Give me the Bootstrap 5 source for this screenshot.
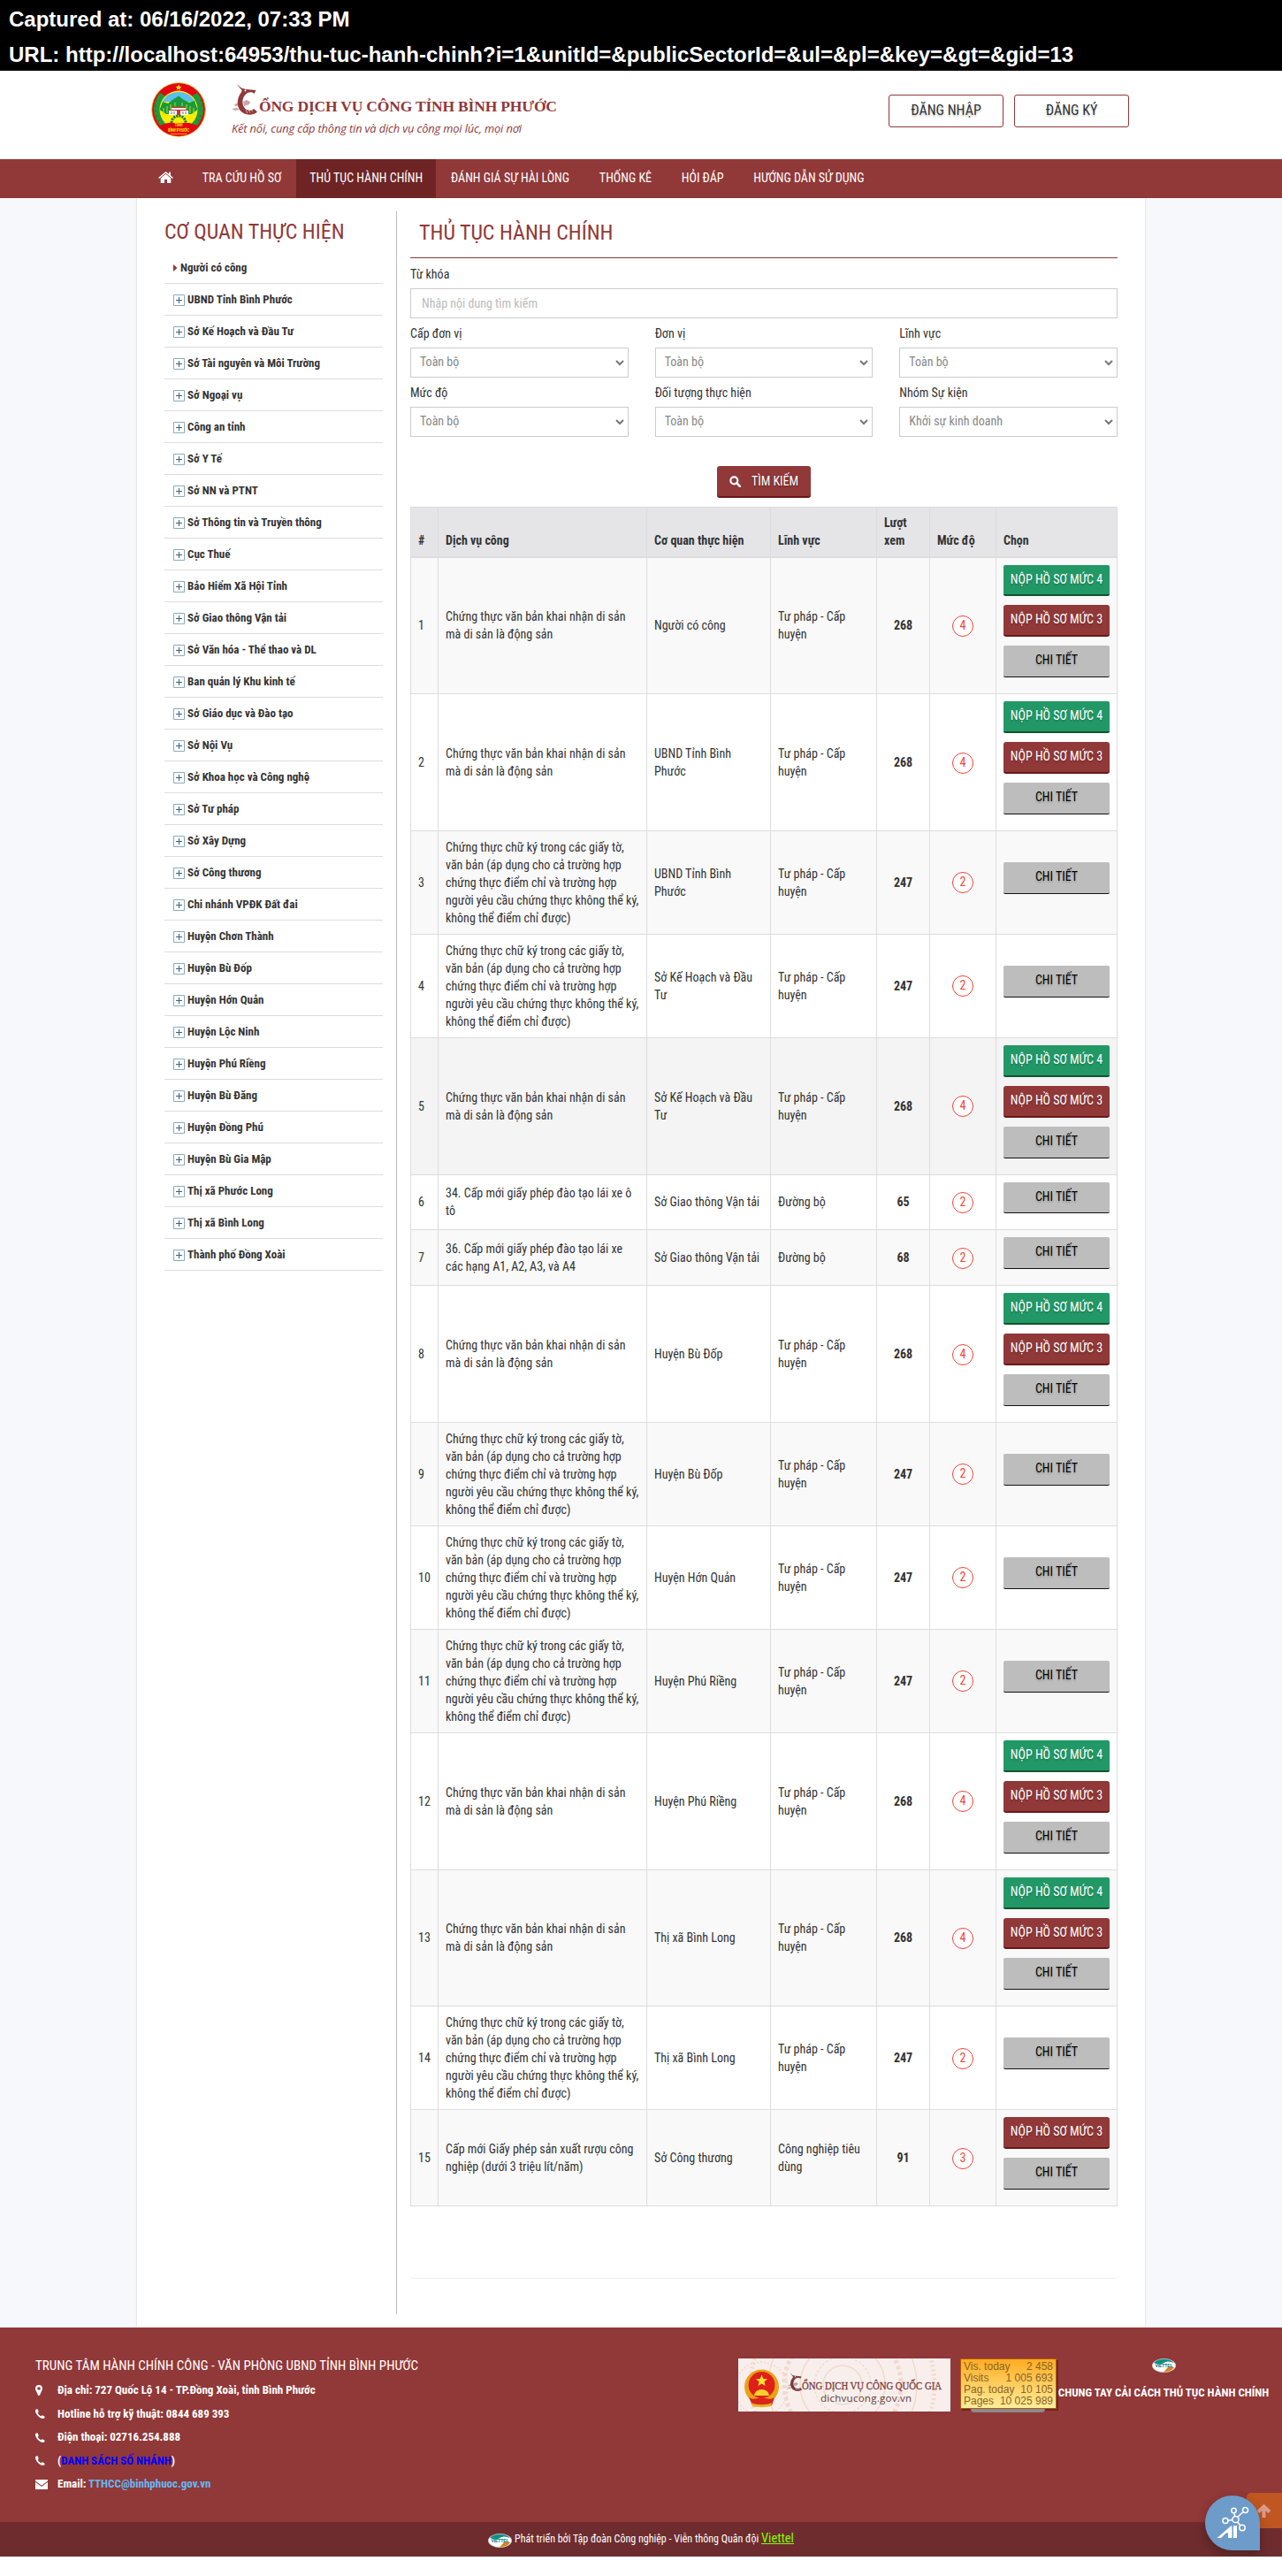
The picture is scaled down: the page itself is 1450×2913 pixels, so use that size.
<!DOCTYPE html>
<html lang="vi">
<head>
<meta charset="utf-8">
<title>Thủ tục hành chính</title>
<meta name="viewport" content="width=device-width, initial-scale=1">
<link href="https://cdn.jsdelivr.net/npm/bootstrap@5.3.0/dist/css/bootstrap.min.css" rel="stylesheet">
<script src="https://cdn.jsdelivr.net/npm/bootstrap@5.3.0/dist/js/bootstrap.bundle.min.js"></script>
<style>
:root{--brand:#913838;--brand-dark:#6e2424}
body{font-family:"Roboto Condensed",Roboto,"Liberation Sans",sans-serif;font-size:14px;line-height:20px;color:#333;background:#fff}
svg{display:block;flex:none}
.capture-bar{height:80px;background:#000;color:#fff;font:bold 24px/40px "Liberation Sans",Arial,sans-serif;padding:2px 0 0 10px}
.page-wrap{width:1140px;margin:0 auto}
.site-head{height:100px;padding:13px 18px 0 16px}
.wordmark{margin-left:29px}
.btn-auth{width:130px;height:37px;border:1px solid var(--brand);border-radius:3px;color:#333;font-size:16px;line-height:20px;padding-top:7px;text-align:center;text-shadow:0 2px 2px rgba(0,0,0,.2);text-decoration:none;margin-top:14px}
.main-nav{background:var(--brand);height:44px}
.main-nav a{color:#fff;line-height:43px;height:44px;text-decoration:none;padding:0 17px 0 16.8px;display:block;white-space:nowrap}
.main-nav a.on{background:var(--brand-dark);padding:0 15px}
.main-nav a.home-link{padding:14px 16px 0 24px}
.page-bg{background:#f7f8fb}
.sheet{background:#fff;height:2408px;box-shadow:0 0 2px rgba(0,0,0,.2);padding:15px 31px 15px 31px}
.side-col{width:263px;border-right:1px solid #bbb;height:2378px;padding-right:15px;flex:none}
.main-col{width:800px;flex:none;margin-left:15px}
.sec-title{font-size:24px;line-height:30px;color:var(--brand);font-weight:400;margin:0}
.side-col .sec-title{padding:8px 0 8px}
.main-col .sec-title{padding:9px 0 13px 10px;border-bottom:1px solid var(--brand);height:53px}
.unit-item{height:36px;border-bottom:1px solid #ddd;font-weight:700;font-size:13px;padding:0 0 0 10px}
.unit-item svg{margin:2px 3px 0 0}
.fld{height:20px;margin:0 0 6px;display:block}
.main-col .form-control,.main-col .form-select{height:34px;border:1px solid #ccc;border-radius:0;font-size:14px;line-height:20px;padding:5px 12px;color:#888;background-color:#fff}
.main-col .form-control::placeholder{color:#bbb;opacity:1}
.main-col .form-select{padding:4px 10px 6px;background-image:url("data:image/svg+xml,%3Csvg xmlns='http://www.w3.org/2000/svg' viewBox='0 0 10 7'%3E%3Cpath d='M1 1l4 4 4-4' fill='none' stroke='%23777' stroke-width='2'/%3E%3C/svg%3E");background-size:10px 7px;background-position:right 4px center}
.btn-find{width:106px;height:36px;background:var(--brand);border:0;border-bottom:2px solid #6b1717;border-radius:3px;color:#fff;font-size:14px;text-shadow:0 1px 2px rgba(0,0,0,.4);padding:0}
.svc{table-layout:fixed;width:800px;margin:0;border-collapse:collapse;color:#333}
.svc th,.svc td{border:1px solid #ddd;padding:8px;vertical-align:middle}
.svc th{background:#e5e5e8;vertical-align:bottom;border-bottom-width:2px;padding:7px 8px 7.500px}
.svc tr.odd td{background:#f9f9f9}
.svc tr.hov td{background:#f4f4f4}
.lvl{display:block;width:24px;height:24px;border:1px solid #f44336;border-radius:50%;color:#f44336;line-height:21px;background:#fff;text-align:center;margin:1px auto 0}
.act{display:block;width:120px;height:35.9px;border-radius:2px;margin-bottom:10px;text-align:center;line-height:33px;text-decoration:none;text-shadow:0 2px 2px rgba(0,0,0,.2)}
.act-4{background:#229866;border-bottom:2px solid #14532f;color:#fff}
.act-3{background:var(--brand);border-bottom:2px solid #6b1717;color:#fff;border-radius:3px}
.act-d{background:#bcbdbc;border-bottom:1px solid #111;color:#000}
.table-box{height:2004px;border-bottom:1px solid #eee;border-radius:4px}
.foot{background:var(--brand);height:220px;color:#fff;padding:33px 15px 0 40px}
.foot-head{font-size:15px;line-height:20px;margin-bottom:5px}
.foot-line{font-size:13px;font-weight:700;height:26.5px;line-height:26px}
.foot-line .ico{width:25px;flex:none}
.foot-line a{text-decoration:none}
.counter{width:109px;height:57px;margin-left:11px;border:1px solid #e08a00;outline:1px solid #b35a10;outline-offset:-1px;background:linear-gradient(#ffab22,#ffee9c);font:12px/13px "Liberation Sans",Arial,sans-serif;color:#8a6420;padding:2px 3px;box-shadow:2px 2px 0 rgba(60,20,20,.45);white-space:nowrap}
.counter-foot{width:84px;height:4px;background:#8b8b8b;margin:0 0 0 23px;border-radius:0 0 4px 4px}
.slogan-foot{font-weight:700;font-size:13px;line-height:20px;margin-top:13px}
.foot-end{background:#6e2c2e;height:39px;color:#fff;font-size:12px;padding-bottom:1px}
.foot-end a{color:#7fff00;font-size:14.5px;text-decoration:underline}
.to-top{position:absolute;left:1410px;top:2819px;width:40px;height:40px;background:#c05621;border-radius:5px 0 0 5px}
.ai-bot{position:absolute;left:1363px;top:2822px;width:62px;height:62px;background:#6d9bca;border-radius:50% 50% 0 50%;box-shadow:0 5px 12px rgba(0,0,0,.25)}
</style>
</head>
<body class="position-relative">
<svg width="0" height="0" class="position-absolute">
  <defs>
    <symbol id="viettel" viewBox="0 0 27 16">
      <ellipse cx="13.5" cy="8" rx="13.3" ry="7.8" fill="#fff"/>
      <path d="M2 5C5 1 9 .5 14 .5s9 2 10.500 4.500c-4-2-8-2-11 0s-8 1.500-11.500 0z" fill="#0f8f83"/>
      <path d="M12.500 15.500c5 .3 10-1.500 12.500-5.500-3.500-1.500-7-.5-8.500 1.500s-2.500 3-4 4z" fill="#d9801f"/>
      <ellipse cx="13.5" cy="8" rx="13" ry="7.500" fill="none" stroke="#bfc9c7" stroke-width=".6"/>
      <text x="13.500" y="9.800" font-size="5" font-weight="700" font-family="Liberation Sans" text-anchor="middle" textLength="20" fill="#0a6f68">VIETTEL</text>
    </symbol>
    <symbol id="phone" viewBox="0 0 11 11"><path d="M0 1.200C1 .2 2.200-.2 2.600.6L3.700 3c.2.6-.9 1-1 1.500.3 1.200 2.200 3.300 3.500 3.700.6 0 1.100-1.100 1.800-.9l2.500 1.500c.5.400-.3 1.700-1 2C5.500 12-.8 5.500 0 1.200z" fill="#fff"/></symbol>
    <symbol id="dragonC" viewBox="0 0 30 36">
      <path d="M5.500 0L11 4.500 16 6l6.500.5 5 .5-2 4-2-1.500c-3-.5-5.500.3-7.500 2-4.500 4-5 12.500-.5 16.500 2 1.700 4.500 2 7.500 1.500L25 28l4 3.500c-4 3.500-10 4-14.500 2C5.500 30 5 18 9.500 11.500 10.500 9.600 12 8 11.500 7z" fill="currentColor"/>
      <path d="M0 28l6-1 3 2-5 1zM3 23l5-2 2 3-6 1zM13 20l4-2 4 2-1 3-6 2z" fill="currentColor" opacity=".45"/>
      <path d="M16 29l2 4M19 29l2 3.500M22 28.500l2 3" stroke="#fff" stroke-width=".6"/>
      <circle cx="15.500" cy="7.500" r="1" fill="#fff"/>
    </symbol>
  </defs>
</svg>

<div class="capture-bar"><div>Captured at: 06/16/2022, 07:33 PM</div><div>URL: http://localhost:64953/thu-tuc-hanh-chinh?i=1&amp;unitId=&amp;publicSectorId=&amp;ul=&amp;pl=&amp;key=&amp;gt=&amp;gid=13</div></div>

<header class="page-wrap site-head d-flex align-items-start">
  <svg width="62" height="62" viewBox="0 0 62 62">
    <circle cx="31" cy="31" r="30.300" fill="#e30613" stroke="#e8c21a" stroke-width=".8"/>
    <path d="M10 12A28 28 0 0 0 12 51l8-8V18zM52 12a28 28 0 0 1-2 39l-8-8V18z" fill="#1d9a3c"/>
    <circle cx="31" cy="31" r="21.500" fill="#ffed00"/>
    <path d="M12.500 22a21 21 0 0 1 37 0z" fill="#5bc0f0"/>
    <path d="M9.500 31L13 22l6 2 5-4 7-4.500 6 4.500 6 3 6-2 3.500 10-7 5H17z" fill="#189a3a"/>
    <path d="M18 27v8M22 25v6M40 25v6M44 27v8M14 29v8M48 29v8M27 23v4M35 23v4" stroke="#b7d93a" stroke-width="1"/>
    <path d="M23 29h16v2H23zM20 32h22v5H20z" fill="#fff"/><path d="M20 31.500h22M23 28.500h16" stroke="#d22" stroke-width="1"/>
    <path d="M23 33v3M26 33v3M36 33v3M39 33v3" stroke="#678" stroke-width="1"/><path d="M29 32h4v5h-4z" fill="#c33"/>
    <path d="M23 46a8 8 0 0 1 16 0" fill="none" stroke="#147a35" stroke-width="3" stroke-dasharray="2.200 1"/>
    <path d="M8 50c3-2 7-3 11-4h24c4 1 8 2 11 4a30 30 0 0 1-46 0z" fill="#e30613"/>
    <path d="M31 2.500l1 2.300 2.400.1-1.900 1.500.7 2.400-2.200-1.400-2.200 1.400.7-2.400-1.900-1.500 2.400-.1z" fill="#ffed00"/>
    <g stroke="#e30613" stroke-width="1.300" fill="none" stroke-dasharray="1 5"><path d="M6 20a28 28 0 0 0 5 27M56 20a28 28 0 0 1-5 27"/></g>
    <text x="31" y="50" font-size="4.500" font-weight="700" fill="#ffd900" text-anchor="middle">TỈNH</text>
    <text x="31" y="56" font-size="5" font-weight="700" fill="#ffd900" text-anchor="middle" textLength="24">BÌNH PHƯỚC</text>
    <path d="M22 58.500h18" stroke="#ffd900" stroke-width=".7"/>
  </svg>
  <svg class="wordmark" width="370" height="66" viewBox="0 0 370 66" style="color:#913838">
    <use href="#dragonC" x="0" y="2" width="30" height="36"/>
    <text x="31" y="32.500" font-family="Liberation Serif" font-weight="700" font-size="17.500" textLength="337" fill="#913838">ỔNG DỊCH VỤ CÔNG TỈNH BÌNH PHƯỚC</text>
    <text x="0" y="57" font-family="Open Sans" font-style="italic" font-size="12.800" textLength="328" fill="#913838">Kết nối, cung cấp thông tin và dịch vụ công mọi lúc, mọi nơi</text>
  </svg>
  <div class="d-flex ms-auto" style="gap:12px">
    <a class="btn-auth" href="#">ĐĂNG NHẬP</a><a class="btn-auth" href="#">ĐĂNG KÝ</a>
  </div>
</header>

<nav class="main-nav"><div class="page-wrap d-flex">
  <a href="#" class="home-link"><svg width="17" height="13" viewBox="0 0 17 13" fill="#fff"><path d="M8.500 0L0 7l.9 1 7.600-6.300L16.100 8l.9-1-3-2.500V.8h-2v2z"/><path d="M8.500 2.800L2.700 7.500V13h4.300V9h3v4h4.300V7.500z"/></svg></a>
  <a href="#">TRA CỨU HỒ SƠ</a><a href="#" class="on">THỦ TỤC HÀNH CHÍNH</a><a href="#">ĐÁNH GIÁ SỰ HÀI LÒNG</a><a href="#">THỐNG KÊ</a><a href="#">HỎI ĐÁP</a><a href="#">HƯỚNG DẪN SỬ DỤNG</a>
</div></nav>

<main class="page-bg"><div class="page-wrap sheet d-flex">
  <aside class="side-col">
    <h2 class="sec-title">CƠ QUAN THỰC HIỆN</h2>
    <div id="units"></div>
  </aside>
  <section class="main-col">
    <h2 class="sec-title">THỦ TỤC HÀNH CHÍNH</h2>
    <div style="padding-top:8px"><label class="fld">Từ khóa</label><input class="form-control" placeholder="Nhập nội dung tìm kiếm"></div>
    <div class="row" id="filters" style="--bs-gutter-x:30px"></div>
    <div class="text-center" style="padding:33px 0 10px;height:79px"><button class="btn-find d-inline-flex align-items-center justify-content-center" type="button"><svg width="13" height="13" viewBox="0 0 13 13" class="me-2"><circle cx="5.300" cy="5.300" r="4" fill="none" stroke="#fff" stroke-width="2.200"/><path d="M8.200 8.200l3.600 3.600" stroke="#fff" stroke-width="2.600" stroke-linecap="round"/></svg><span class="ps-1">TÌM KIẾM</span></button></div>
    <div class="table-box"><table class="svc">
      <colgroup><col style="width:31px"><col style="width:236px"><col style="width:140px"><col style="width:120px"><col style="width:60px"><col style="width:75px"><col></colgroup>
      <thead><tr><th>#</th><th>Dịch vụ công</th><th>Cơ quan thực hiện</th><th>Lĩnh vực</th><th>Lượt xem</th><th>Mức độ</th><th>Chọn</th></tr></thead>
      <tbody id="rows"></tbody>
    </table></div>
  </section>
</div></main>

<footer>
  <div class="foot d-flex">
    <div class="flex-grow-1">
      <div class="foot-head">TRUNG TÂM HÀNH CHÍNH CÔNG - VĂN PHÒNG UBND TỈNH BÌNH PHƯỚC</div>
      <div class="foot-line d-flex align-items-center"><span class="ico"><svg width="8" height="12" viewBox="0 0 8 12"><path d="M4 0a4 4 0 0 0-4 4c0 2 1.500 3.500 2.800 7.200.4 1 2 1 2.400 0C6.500 7.500 8 6 8 4a4 4 0 0 0-4-4zm0 2.200a1.800 1.800 0 1 1 0 3.600 1.800 1.800 0 0 1 0-3.600z" fill="#fff" fill-rule="evenodd"/></svg></span>Địa chỉ: 727 Quốc Lộ 14 - TP.Đồng Xoài, tỉnh Bình Phước</div>
      <div class="foot-line d-flex align-items-center"><span class="ico"><svg width="11" height="11"><use href="#phone"/></svg></span>Hotline hỗ trợ kỹ thuật: 0844 689 393</div>
      <div class="foot-line d-flex align-items-center"><span class="ico"><svg width="11" height="11"><use href="#phone"/></svg></span>Điện thoại: 02716.254.888</div>
      <div class="foot-line d-flex align-items-center"><span class="ico"><svg width="11" height="11"><use href="#phone"/></svg></span><span>(<a href="#" style="color:#00f">DANH SÁCH SỐ NHÁNH</a>)</span></div>
      <div class="foot-line d-flex align-items-center"><span class="ico"><svg width="14" height="11" viewBox="0 0 14 11"><path d="M0 0h14v1.500L7 6.700 0 1.500z" fill="#fff"/><path d="M0 2.800l7 5.100 7-5.100V11H0z" fill="#fff"/></svg></span><span>Email: <a href="#" style="color:#63b9f5">TTHCC@binhphuoc.gov.vn</a></span></div>
    </div>
    <svg width="240" height="60" viewBox="0 0 240 60" style="margin-top:2px;color:#7b3a3a">
      <path d="M0 0h240v60H0z" fill="#f8efec"/>
      <g fill="none" stroke="#f1d9d0" stroke-width="1.500"><circle cx="118" cy="30" r="22"/><circle cx="118" cy="30" r="32" stroke-dasharray="3 2"/><circle cx="118" cy="30" r="48"/><circle cx="118" cy="30" r="66" stroke-width="5" stroke-dasharray="4 3"/><circle cx="118" cy="30" r="84"/><circle cx="118" cy="30" r="104" stroke-width="5" stroke-dasharray="2 3"/><circle cx="26" cy="34" r="30" stroke-dasharray="2 2"/></g>
      <circle cx="26.500" cy="32" r="19.500" fill="#e8a317"/><circle cx="26.500" cy="30" r="15" fill="#e01f1a"/>
      <path d="M26.500 18.500l1.800 4.500 4.700.3-3.600 3 1.200 4.700-4.100-2.600-4.100 2.600 1.200-4.700-3.600-3 4.700-.3z" fill="#ffe52e"/>
      <path d="M18 42a8.500 7 0 0 1 17 0z" fill="#f7d22e"/><path d="M12 44c4 3 9 2 14.500-1 5.500 3 10.500 4 14.500 1l-3 9H16z" fill="#d8241c"/><path d="M15 50c5 3 18 3 23 0l-1 4c-6 1.500-15 1.500-21 0z" fill="#e8b21f"/>
      <use href="#dragonC" x="55" y="16" width="18" height="22"/>
      <text x="72" y="35" font-family="Liberation Serif" font-size="12.500" font-weight="400" stroke="#7b3a3a" stroke-width=".3" textLength="158" lengthAdjust="spacingAndGlyphs" fill="#7b3a3a">ỔNG DỊCH VỤ CÔNG QUỐC GIA</text>
      <text x="93" y="49" font-family="Open Sans" font-size="11.500" textLength="103" fill="#5a3b3b">dichvucong.gov.vn</text>
    </svg>
    <div style="margin-top:2px"><div class="counter">
      <div class="d-flex justify-content-between"><span>Vis. today</span><span>2 458</span></div>
      <div class="d-flex justify-content-between"><span>Visits</span><span>1 005 693</span></div>
      <div class="d-flex justify-content-between"><span>Pag. today</span><span>10 105</span></div>
      <div class="d-flex justify-content-between"><span>Pages</span><span>10 025 989</span></div>
    </div><div class="counter-foot"></div></div>
    <div class="d-flex flex-column align-items-center" style="width:240px;padding:2px 0 0 2px">
      <svg width="27" height="16"><use href="#viettel"/></svg>
      <div class="slogan-foot text-nowrap">CHUNG TAY CẢI CÁCH THỦ TỤC HÀNH CHÍNH</div>
    </div>
  </div>
  <div class="foot-end d-flex justify-content-center align-items-center">
    <svg width="27" height="16" style="margin:4px 3px 0 0"><use href="#viettel"/></svg>
    <span>Phát triển bởi Tập đoàn Công nghiệp - Viễn thông Quân đội <a href="#">Viettel</a></span>
  </div>
</footer>

<a class="to-top" href="#"><svg width="40" height="40" viewBox="0 0 40 40"><path d="M19.500 28V16M13 21.500l6.500-6 6.500 6" fill="none" stroke="#dc9c8c" stroke-width="4"/></svg></a>
<div class="ai-bot"><svg width="62" height="62" viewBox="0 0 62 62" fill="none" stroke="#fff" stroke-width="1.500">
  <circle cx="32.500" cy="17" r="2.700"/><circle cx="45.500" cy="16.500" r="3"/><circle cx="34.500" cy="27" r="3.600"/><circle cx="23" cy="28.500" r="3"/><circle cx="42" cy="36.500" r="3.200"/>
  <path d="M33 20l.7 3.500M43 18.500l-6 5.800M26 28.200l5-.7M36.500 30l3.500 4"/>
  <path d="M13.500 48L29 34.500h1.500V48h-4.500V42l-3 1-5 5z" fill="#fff" stroke="none"/><path d="M32 34h4v14h-4z" fill="#fff" stroke="none"/></svg></div>

<script>
const units = ["Người có công","UBND Tỉnh Bình Phước","Sở Kế Hoạch và Đầu Tư","Sở Tài nguyên và Môi Trường","Sở Ngoại vụ","Công an tỉnh","Sở Y Tế","Sở NN và PTNT","Sở Thông tin và Truyền thông","Cục Thuế","Bảo Hiểm Xã Hội Tỉnh","Sở Giao thông Vận tải","Sở Văn hóa - Thể thao và DL","Ban quản lý Khu kinh tế","Sở Giáo dục và Đào tạo","Sở Nội Vụ","Sở Khoa học và Công nghệ","Sở Tư pháp","Sở Xây Dựng","Sở Công thương","Chi nhánh VPĐK Đất đai","Huyện Chơn Thành","Huyện Bù Đốp","Huyện Hớn Quản","Huyện Lộc Ninh","Huyện Phú Riềng","Huyện Bù Đăng","Huyện Đồng Phú","Huyện Bù Gia Mập","Thị xã Phước Long","Thị xã Bình Long","Thành phố Đồng Xoài"];
const arrow = '<svg width="5" height="8" viewBox="0 0 5 8" style="margin:0 3px 0 0"><path d="M0 0l4.500 4L0 8z" fill="#913838"/></svg>';
const plus = '<svg width="13" height="13" viewBox="0 0 13 13"><path d="M.5.5h12v12H.5z" fill="#fff" stroke="#8aabbd"/><path d="M3 6.500h7M6.500 3v7" stroke="#3d6079"/></svg>';
document.getElementById("units").innerHTML = units.map((u, i) => `<div class="unit-item d-flex align-items-center">${i ? plus : arrow}<span>${u}</span></div>`).join("");

const filters = [["Cấp đơn vị"],["Đơn vị"],["Lĩnh vực"],["Mức độ"],["Đối tượng thực hiện"],["Nhóm Sự kiện","Khởi sự kinh doanh"]];
document.getElementById("filters").innerHTML = filters.map(([l, v]) => `<div class="col-4" style="padding-top:7px"><label class="fld">${l}</label><select class="form-select"><option>${v || "Toàn bộ"}</option></select></div>`).join("");

const khai = "Chứng thực văn bản khai nhận di sản mà di sản là động sản";
const ky = "Chứng thực chữ ký trong các giấy tờ, văn bản (áp dụng cho cả trường hợp chứng thực điểm chỉ và trường hợp người yêu cầu chứng thực không thể ký, không thể điểm chỉ được)";
const tp = "Tư pháp - Cấp huyện";
const data = [
 [khai,"Người có công",tp,268,4],[khai,"UBND Tỉnh Bình Phước",tp,268,4],[ky,"UBND Tỉnh Bình Phước",tp,247,2],
 [ky,"Sở Kế Hoạch và Đầu Tư",tp,247,2],[khai,"Sở Kế Hoạch và Đầu Tư",tp,268,4],
 ["34. Cấp mới giấy phép đào tạo lái xe ô tô","Sở Giao thông Vận tải","Đường bộ",65,2],
 ["36. Cấp mới giấy phép đào tạo lái xe các hạng A1, A2, A3, và A4","Sở Giao thông Vận tải","Đường bộ",68,2],
 [khai,"Huyện Bù Đốp",tp,268,4],[ky,"Huyện Bù Đốp",tp,247,2],[ky,"Huyện Hớn Quản",tp,247,2],[ky,"Huyện Phú Riềng",tp,247,2],
 [khai,"Huyện Phú Riềng",tp,268,4],[khai,"Thị xã Bình Long",tp,268,4],[ky,"Thị xã Bình Long",tp,247,2],
 ["Cấp mới Giấy phép sản xuất rượu công nghiệp (dưới 3 triệu lít/năm)","Sở Công thương","Công nghiệp tiêu dùng",91,3]
];
const btn4 = '<a href="#" class="act act-4">NỘP HỒ SƠ MỨC 4</a>', btn3 = '<a href="#" class="act act-3">NỘP HỒ SƠ MỨC 3</a>', btnD = '<a href="#" class="act act-d">CHI TIẾT</a>';
document.getElementById("rows").innerHTML = data.map(([s, o, f, v, l], i) =>
 `<tr class="${i === 4 ? "hov" : i % 2 ? "" : "odd"}"><td>${i + 1}</td><td>${s}</td><td>${o}</td><td>${f}</td><td class="text-center fw-bold">${v}</td><td><span class="lvl">${l}</span></td><td>${l > 3 ? btn4 : ""}${l > 2 ? btn3 : ""}${btnD}</td></tr>`).join("");
</script>
</body>
</html>
